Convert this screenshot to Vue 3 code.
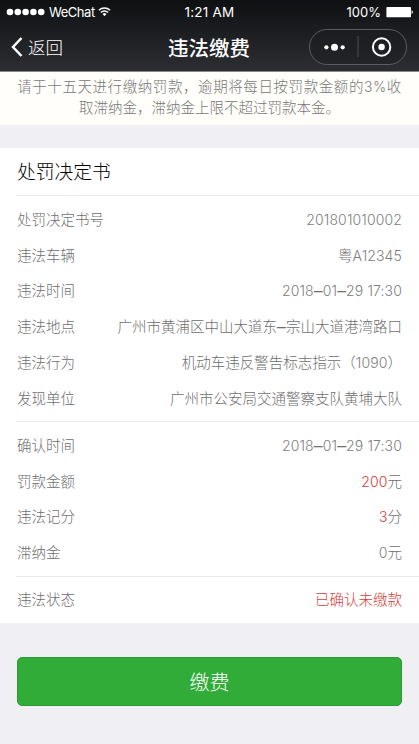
<script setup>
const groups = [
  [
    { label: '处罚决定书号', value: '201801010002' },
    { label: '违法车辆', value: '粤A12345' },
    { label: '违法时间', value: '2018–01–29 17:30' },
    { label: '违法地点', value: '广州市黄浦区中山大道东–宗山大道港湾路口' },
    { label: '违法行为', value: '机动车违反警告标志指示（1090）' },
    { label: '发现单位', value: '广州市公安局交通警察支队黄埔大队' },
  ],
  [
    { label: '确认时间', value: '2018–01–29 17:30' },
    { label: '罚款金额', strong: '200', value: '元' },
    { label: '违法记分', strong: '3', value: '分' },
    { label: '滞纳金', value: '0元' },
  ],
  [{ label: '违法状态', strong: '已确认未缴款', value: '' }],
]

// Splits a value into Latin, dash and Chinese runs so each gets its own type settings.
const runs = (text) => text.split(/([A-Za-z0-9: ]+|–)/).filter(Boolean)
const toPart = (red) => (text) => ({
  text,
  classes: { red, latin: /^[\w: ]+$/.test(text), dash: text === '–' },
})
const parts = (row) => [
  ...runs(row.strong || '').map(toPart(true)),
  ...runs(row.value).map(toPart(false)),
]
</script>

<template>
  <div class="page">
    <header class="header">
      <div class="status">
        <div class="carrier">
          <svg class="signal" width="39" height="8" viewBox="0 0 39 8" fill="#fff">
            <circle v-for="n in 5" :key="n" :cx="n * 7.8 - 3.8" cy="4" r="3.3" />
          </svg>
          <span class="network">WeChat</span>
          <svg class="wifi" width="13" height="11" viewBox="0 0 14 11">
            <g fill="none" stroke="#fff" stroke-width="1.6">
              <path d="M1 4.1a8.6 8.6 0 0 1 12 0" />
              <path d="M3.2 6.5a5.4 5.4 0 0 1 7.6 0" />
            </g>
            <path d="M4.9 8.2a3 3 0 0 1 4.2 0L7 10.5z" fill="#fff" />
          </svg>
        </div>
        <span class="clock">1:21 AM</span>
        <div class="power">
          <span>100%</span>
          <svg width="28" height="12" viewBox="0 0 28 12">
            <rect x="0.4" y="0.9" width="24.6" height="10.4" rx="0.8" fill="#fff" />
            <path d="M25.6 4.3c1.7.4 1.7 3.2 0 3.6z" fill="#fff" />
          </svg>
        </div>
      </div>
      <nav class="nav">
        <div class="back">
          <svg width="12" height="20" viewBox="0 0 12 20">
            <path d="M10.5 1 2 10l8.5 9" fill="none" stroke="#fff" stroke-width="2.5" />
          </svg>
          <span>返回</span>
        </div>
        <h1 class="title">违法缴费</h1>
        <div class="capsule">
          <svg width="98" height="36" viewBox="0 0 98 36">
            <rect x="0.5" y="0.5" width="97" height="35" rx="17.5" fill="#1b1c1f" fill-opacity=".45" stroke="#5b5d60" />
            <g fill="#fff">
              <circle cx="17.4" cy="18.3" r="2.1" />
              <circle cx="25.5" cy="18.3" r="3.5" />
              <circle cx="33.7" cy="18.3" r="2.1" />
              <circle cx="72.6" cy="18" r="3.2" />
            </g>
            <path d="M49 7v21" stroke="#4b4d50" />
            <circle cx="72.6" cy="18" r="8.7" fill="none" stroke="#fff" stroke-width="2" />
          </svg>
        </div>
      </nav>
    </header>

    <p class="notice">
      <span class="notice-line spaced">请于十五天进行缴纳罚款，逾期将每日按罚款金额的<span class="latin">3%</span>收</span>
      <span class="notice-line">取滞纳金，滞纳金上限不超过罚款本金。</span>
    </p>

    <main class="card">
      <h2 class="heading">处罚决定书</h2>
      <dl v-for="(group, i) in groups" :key="i" class="group">
        <div v-for="row in group" :key="row.label" class="row">
          <dt>{{ row.label }}</dt>
          <dd><span v-for="(part, k) in parts(row)" :key="k" :class="part.classes">{{ part.text }}</span></dd>
        </div>
      </dl>
    </main>

    <div class="action">
      <button type="button" class="pay">缴费</button>
    </div>
  </div>
</template>

<style>
body {
  margin: 0;
  background: #efeff4;
}
</style>

<style scoped>
.page {
  height: 744px;
  overflow: hidden;
  background: #efeff4;
  font-family: "Noto Sans CJK SC", sans-serif;
  font-weight: 300;
  color: #6e6e6e;
}
.header {
  box-sizing: border-box;
  height: 72px;
  background: linear-gradient(#0f1012, #2c2e32);
  border-bottom: 1px solid #8d8b88;
  color: #fff;
}
.status {
  display: grid;
  grid-template-columns: 1fr auto 1fr;
  align-items: center;
  height: 23px;
  padding: 0 6px;
  font-family: Inter, sans-serif;
  font-size: 13px;
  font-weight: 400;
}
.carrier,
.power {
  display: flex;
  align-items: center;
}
.network {
  margin: 0 3px 0 4px;
  letter-spacing: -0.45px;
}
.clock {
  font-size: 13.5px;
  letter-spacing: 0.2px;
}
.power {
  justify-content: flex-end;
  gap: 5px;
  margin-right: -1px;
}
.nav {
  display: grid;
  grid-template-columns: 1fr auto 1fr;
  align-items: center;
  height: 48px;
  padding: 0 12px 0 11px;
}
.back {
  display: flex;
  align-items: center;
  gap: 5px;
  font-size: 17.5px;
}
.back span {
  padding-bottom: 2px;
}
.title {
  margin: 0;
  padding-bottom: 1px;
  font-size: 20.5px;
  font-weight: 500;
}
.capsule {
  display: flex;
  justify-content: flex-end;
}
.notice {
  box-sizing: border-box;
  display: flex;
  flex-direction: column;
  align-items: center;
  height: 53px;
  margin: 0;
  padding-top: 3px;
  background: #fffefa;
  color: #777;
  font-size: 14.5px;
  line-height: 21px;
  white-space: nowrap;
}
.notice-line {
  height: 21px;
}
.spaced {
  letter-spacing: 0.58px;
}
.latin {
  font-family: Inter, sans-serif;
  font-size: 14px;
  line-height: 1;
  color: #808080;
}
.card {
  margin-top: 23px;
  padding-left: 16px;
  background: #fff;
}
.heading {
  margin: 0;
  padding-left: 1px;
  height: 47px;
  font-size: 18.8px;
  font-weight: 300;
  line-height: 45px;
  color: #000;
}
.group {
  margin: 0;
  padding: 4.75px 17px 5.75px 1px;
  border-top: 1px solid #e9e9eb;
}
.row {
  display: flex;
  justify-content: space-between;
  height: 35.75px;
  font-size: 14.5px;
  line-height: 35.75px;
  white-space: nowrap;
}
.row dd {
  margin: 0;
}
.row .latin {
  letter-spacing: 0.13px;
  white-space: pre;
}
.row .dash {
  font-family: "Liberation Sans", sans-serif;
  font-size: 16px;
  line-height: 1;
}
.row .red {
  color: #d63c38;
}
.action {
  padding: 34px 17px 0;
}
.pay {
  display: block;
  box-sizing: border-box;
  width: 100%;
  height: 49px;
  padding: 0;
  border: 1px solid #2b9c34;
  border-radius: 5px;
  background: #31ac38;
  color: #fff;
  font-family: inherit;
  font-size: 20px;
  font-weight: 300;
}
</style>
